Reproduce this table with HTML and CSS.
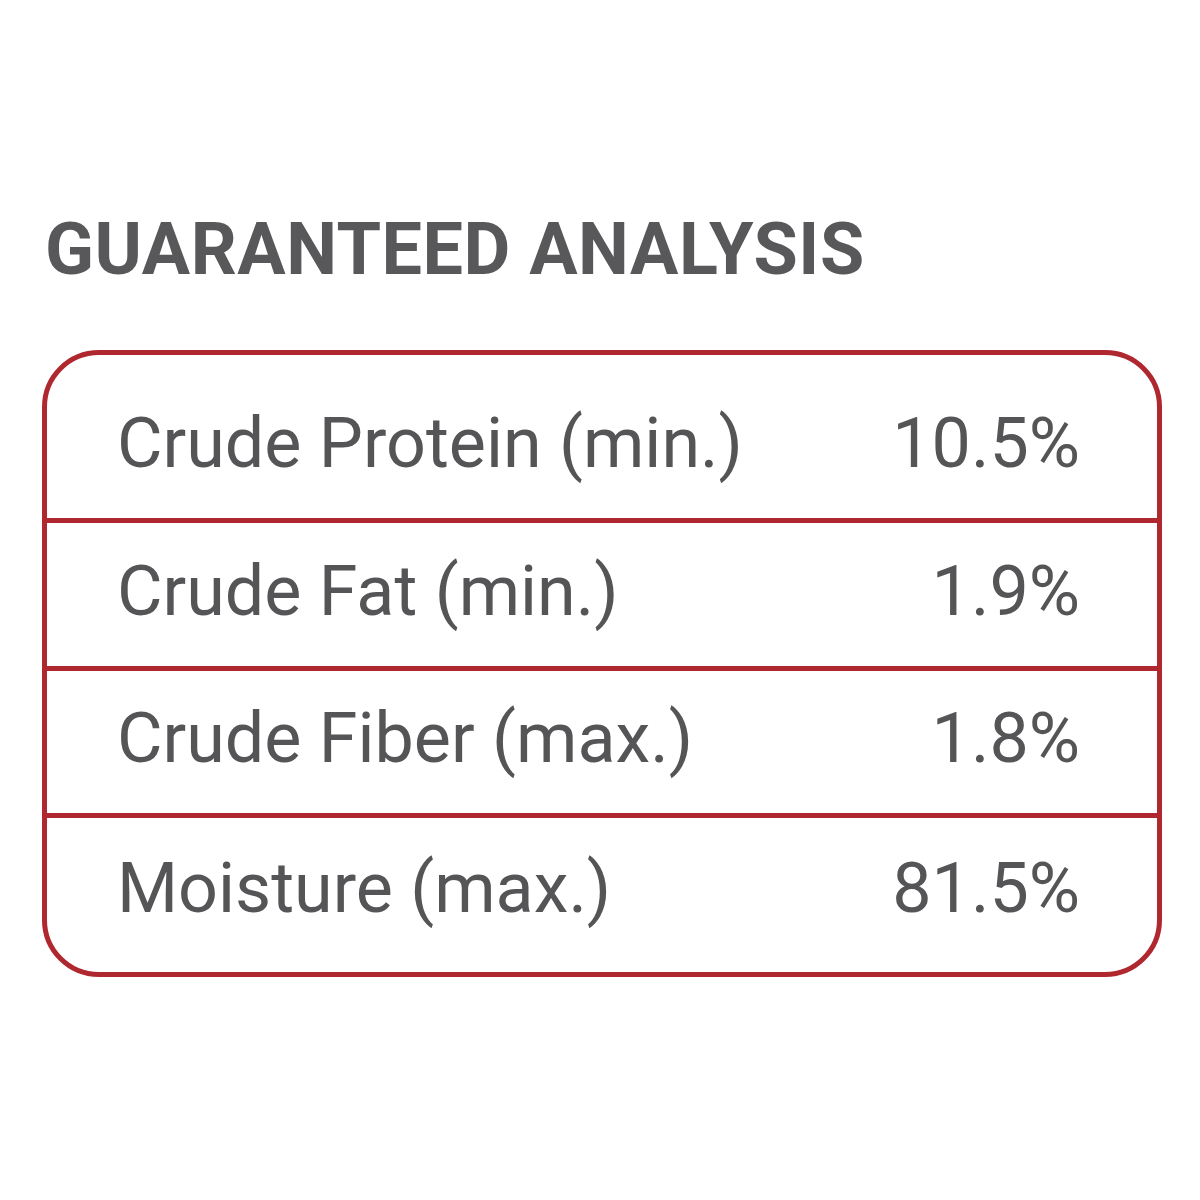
FILE: index.html
```html
<!DOCTYPE html>
<html>
<head>
<meta charset="utf-8">
<link rel="stylesheet" href="styles.css">
</head>
<body>
<div class="page">
  <h1 class="title">GUARANTEED ANALYSIS</h1>
  <div class="table">
    <div class="row r1"><span class="label">Crude Protein (min.)</span><span class="value">10.5%</span></div>
    <div class="row r2"><span class="label">Crude Fat (min.)</span><span class="value">1.9%</span></div>
    <div class="row r3"><span class="label">Crude Fiber (max.)</span><span class="value">1.8%</span></div>
    <div class="row r4"><span class="label">Moisture (max.)</span><span class="value">81.5%</span></div>
  </div>
</div>
</body>
</html>
```
FILE: styles.css
```css
html, body {
  margin: 0;
  padding: 0;
  background: #ffffff;
}
.page {
  width: 1200px;
  height: 1200px;
  padding-top: 205px;
  box-sizing: border-box;
  font-family: Roboto, "DejaVu Sans", sans-serif;
  color: #555557;
}
.title {
  margin: 0 0 0 45px;
  font-size: 72px;
  font-weight: 700;
  line-height: 90px;
  letter-spacing: 0.5px;
  color: #58585a;
}
.table {
  margin: 55px 0 0 42px;
  width: 1120px;
  box-sizing: border-box;
  border: 5px solid #b0282f;
  border-radius: 57px;
  overflow: hidden;
}
.row {
  display: flex;
  align-items: center;
  justify-content: space-between;
  box-sizing: border-box;
  padding: 0 77px 0 70px;
  font-size: 70px;
  line-height: 1;
}
.r1 { height: 163px; padding-top: 12px; }
.r2 { height: 148px; border-top: 5px solid #b0282f; padding-bottom: 8px; }
.r3 { height: 147px; border-top: 5px solid #b0282f; padding-bottom: 8px; }
.r4 { height: 159px; border-top: 5px solid #b0282f; padding-bottom: 14px; }
```
